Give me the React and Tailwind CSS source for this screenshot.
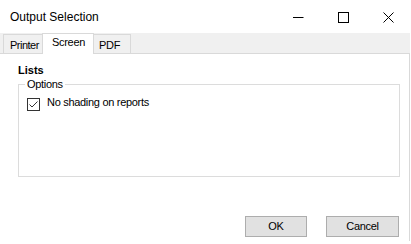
import React from "react";

const font = { fontFamily: '"Liberation Sans", Arial, sans-serif' };

function CaptionButtons() {
  return (
    <div className="flex h-[33px]">
      {/* Minimize */}
      <div className="flex w-[45px] justify-center pt-[12px]">
        <svg width="11" height="11" viewBox="0 0 11 11">
          <line x1="0" y1="5.5" x2="10.5" y2="5.5" stroke="#000" strokeWidth="1" />
        </svg>
      </div>
      {/* Maximize */}
      <div className="flex w-[45px] justify-center pt-[12px]">
        <svg width="11" height="11" viewBox="0 0 11 11">
          <rect x="0.5" y="0.5" width="10" height="10" fill="none" stroke="#000" strokeWidth="1" />
        </svg>
      </div>
      {/* Close */}
      <div className="flex w-[45px] justify-center pt-[12px]">
        <svg width="11" height="11" viewBox="0 0 11 11">
          <path d="M0.5 0.5 L10.5 10.5 M10.5 0.5 L0.5 10.5" stroke="#000" strokeWidth="1" fill="none" />
        </svg>
      </div>
    </div>
  );
}

export default function App() {
  return (
    <div
      className="flex h-[244px] w-[411px] flex-col overflow-hidden bg-white pb-[3px] text-black"
      style={font}
    >
      {/* Title bar */}
      <div className="flex h-[33px] shrink-0 items-center justify-between">
        <div className="pl-[10px] text-[12px] leading-[14px]">Output Selection</div>
        <CaptionButtons />
      </div>

      <div className="flex w-[410px] flex-1 flex-col text-[11px] leading-[13px] tracking-[-0.3px]">
        {/* Tab strip */}
        <div className="flex h-[20px] shrink-0 items-end bg-[#f0f0f0] pl-[3px]">
          <div className="h-[19px] w-[39px] whitespace-nowrap border-l border-t border-[#d9d9d9] pl-[6px] pt-[4px] tracking-[-0.5px]">
            Printer
          </div>
          <div className="relative z-10 -mb-px h-[21px] w-[52px] border-x border-t border-[#d9d9d9] bg-white pl-[9px] pt-[2px]">
            Screen
          </div>
          <div className="h-[19px] w-[37px] border-r border-t border-[#d9d9d9] pl-[5px] pt-[4px]">
            PDF
          </div>
        </div>

        {/* Tab page */}
        <div className="flex flex-1 flex-col border-r border-t border-[#d9d9d9] pt-[10px]">
          <div className="pl-[18px] font-bold tracking-normal">Lists</div>

          <fieldset className="ml-[18px] mt-px w-[382px] border border-[#dcdcdc]">
            <legend className="ml-[6px] px-[2px]">Options</legend>
            <div className="h-[85px] pl-[8px] pt-[7px]">
              <div className="flex items-start gap-[7px]">
                <svg width="13" height="13" viewBox="0 0 13 13" className="shrink-0">
                  <rect x="0.5" y="0.5" width="12" height="12" fill="#fff" stroke="#333" strokeWidth="1" />
                  <path d="M2.5 6.5 L5 9 L10.5 3.5" fill="none" stroke="#333" strokeWidth="1" />
                </svg>
                <span className="-mt-[2px]">No shading on reports</span>
              </div>
            </div>
          </fieldset>

          <div className="mt-[39px] flex justify-end gap-[19px] pr-[10px]">
            <button
              type="button"
              className="h-[21px] w-[62px] border border-[#adadad] bg-[#e1e1e1] text-center"
            >
              OK
            </button>
            <button
              type="button"
              className="h-[21px] w-[73px] border border-[#adadad] bg-[#e1e1e1] text-center"
            >
              Cancel
            </button>
          </div>
        </div>
      </div>
    </div>
  );
}
